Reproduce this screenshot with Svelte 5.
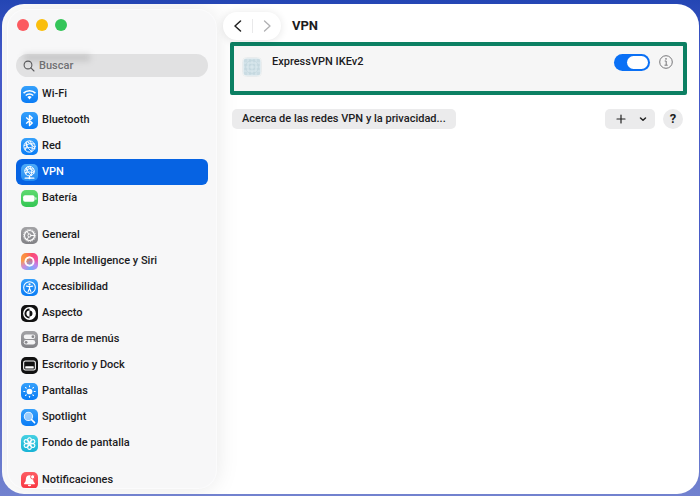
<script>
  const groups = [
    [
      { name: 'Wi-Fi', icon: 'wifi', tone: 'blue' },
      { name: 'Bluetooth', icon: 'bluetooth', tone: 'blue' },
      { name: 'Red', icon: 'globe', tone: 'blue' },
      { name: 'VPN', icon: 'vpn', tone: 'sky' },
      { name: 'Batería', icon: 'battery', tone: 'green' }
    ],
    [
      { name: 'General', icon: 'gear', tone: 'gray' },
      { name: 'Apple Intelligence y Siri', icon: 'siri', tone: 'siri' },
      { name: 'Accesibilidad', icon: 'access', tone: 'blue' },
      { name: 'Aspecto', icon: 'aspect', tone: 'black' },
      { name: 'Barra de menús', icon: 'switches', tone: 'gray' },
      { name: 'Escritorio y Dock', icon: 'dock', tone: 'black' },
      { name: 'Pantallas', icon: 'sun', tone: 'blue' },
      { name: 'Spotlight', icon: 'spot', tone: 'blue' },
      { name: 'Fondo de pantalla', icon: 'flower', tone: 'cyan' }
    ],
    [{ name: 'Notificaciones', icon: 'bell', tone: 'red' }]
  ];
  const petals = [0, 45, 90, 135, 180, 225, 270, 315];
  const sextants = [0, 60, 120, 180, 240, 300];
  let selected = $state('VPN');
  let connected = $state(true);
  let query = $state('');

  function pick(event, name) {
    event.preventDefault();
    selected = name;
  }
</script>

{#snippet globe()}
  <circle cx="8" cy="8" r="5.3" />
  <path d="M5 3.800q1.500 4-1 7.500M8.500 2.800q3.500 4.700 1.500 10M3 7q5-2.500 9.500-1.500M3.500 9.500q4.500-1.500 9.600.5M6 3.500q5 3 7 5.500M4.500 5q2 5.500 5.500 7.800" />
{/snippet}

{#snippet glyph(icon)}
  <svg viewBox="0 0 16 16" fill="none" stroke="#fff" stroke-width="1" stroke-linecap="round" stroke-linejoin="round" aria-hidden="true">
    {#if icon === 'wifi'}
      <path stroke-width="1.4" stroke-linecap="butt" d="M2.400 6.700a7.900 7.900 0 0 1 11.200 0M4.500 8.900a4.900 4.900 0 0 1 7 0" />
      <path fill="#fff" stroke="none" d="M6 10.400a2.800 2.800 0 0 1 4 0L8 12.600z" />
    {:else if icon === 'bluetooth'}
      <path stroke-width="1.300" d="M5.200 5.500l5.400 4.800L8 12.700V3.300l2.600 2.400-5.400 4.800" />
    {:else if icon === 'globe'}
      <g stroke-width=".9">{@render globe()}</g>
    {:else if icon === 'vpn'}
      <g transform="translate(1.2 -.1) scale(.85)">{@render globe()}</g>
      <path d="M8 11.3v2M3.8 13.3h8.4" />
      <circle cx="8" cy="13.3" r="1" fill="#fff" stroke="none" />
    {:else if icon === 'battery'}
      <rect x="2" y="5" width="10.8" height="6" rx="1.8" fill="#fff" stroke="none" />
      <path d="M14 7.3v1.4" />
    {:else if icon === 'gear'}
      <circle cx="8" cy="8" r="4.7" stroke-width="1.1" />
      <circle cx="8" cy="8" r="5.7" stroke-width=".8" stroke-dasharray="1 .8" stroke-linecap="butt" />
      <circle cx="8" cy="8" r="1.5" stroke-width=".9" />
      <path stroke-width=".9" d="M9.5 8h3M7.2 6.7L5.7 4.1M7.2 9.3l-1.5 2.6" />
    {:else if icon === 'siri'}
      <circle cx="8" cy="8" r="2.800" fill="#b08a9a" stroke="none" opacity=".7" />
      {#each sextants as angle}
        <path stroke-width="1" d="M5.200 5.800a2.900 2.900 0 0 1 5.600 0" transform="rotate({angle} 8 8)" />
      {/each}
      <circle cx="8" cy="8" r="3.500" stroke-width=".7" opacity=".8" />
    {:else if icon === 'access'}
      <circle cx="8" cy="8" r="5.5" />
      <circle cx="8" cy="5" r="1" fill="#fff" stroke="none" />
      <path stroke-width="1.1" d="M5.1 6.7l2.9.5 2.9-.5M8 7v2.2M8 9l-1.3 2.8M8 9l1.3 2.8" />
    {:else if icon === 'aspect'}
      <circle cx="8" cy="8" r="5.400" stroke-width="1.300" />
      <path d="M8 2.7a5.3 5.3 0 0 1 0 10.6v-2.5a2.8 2.8 0 0 0 0-5.6z" fill="#fff" stroke="none" />
      <path d="M8 5.1a2.9 2.9 0 0 0 0 5.8z" fill="#fff" stroke="none" />
    {:else if icon === 'switches'}
      <rect x="2.6" y="3.2" width="10.8" height="4.300" rx="2.100" fill="#f4f4f5" stroke="none" />
      <circle cx="11.200" cy="5.350" r="1.3" fill="#88888c" stroke="none" />
      <rect x="2.6" y="8.5" width="10.8" height="4.300" rx="2.100" fill="#f4f4f5" stroke="none" />
      <circle cx="4.800" cy="10.650" r="1.3" fill="#88888c" stroke="none" />
    {:else if icon === 'dock'}
      <rect x="2.5" y="3.8" width="11" height="8.4" rx="1.6" />
      <rect x="4" y="8.8" width="8" height="2" rx=".5" fill="#fff" stroke="none" />
    {:else if icon === 'sun'}
      <circle cx="8" cy="8" r="2.7" fill="#fff" stroke="none" />
      {#each petals as angle}
        <path d="M8 2.6v1" transform="rotate({angle} 8 8)" />
      {/each}
    {:else if icon === 'spot'}
      <circle cx="7" cy="7" r="3.900" fill="#ffffff88" stroke="#e4f2ff" />
      <path stroke-width="1.4" d="M10 10l2.8 2.8" />
    {:else if icon === 'flower'}
      {#each sextants as angle}
        <ellipse cx="8" cy="4.500" rx="1.700" ry="2" stroke-width="1" transform="rotate({angle} 8 8)" />
      {/each}
      <circle cx="8" cy="8" r="1.3" fill="#fff" stroke="none" />
    {:else if icon === 'bell'}
      <path fill="#fff" stroke="none" d="M8 3c-2.2 0-3.3 1.6-3.4 3.5C4.5 9 3.8 9.6 3 10.6c-.3.5 0 .9.5.9h9c.5 0 .8-.4.5-.9-.8-1-1.5-1.6-1.6-4.1C11.3 4.6 10.2 3 8 3zM6.4 12h3.2a1.6 1.5 0 0 1-3.2 0z" />
      <circle cx="11" cy="4.6" r="2" fill="#fff" stroke="#fb4650" stroke-width=".8" />
    {/if}
  </svg>
{/snippet}

<div class="desktop">
  <div class="window">
    <aside>
      <div class="lights">
        <button class="close" aria-label="Cerrar"></button>
        <button class="minimize" aria-label="Minimizar"></button>
        <button class="zoom" aria-label="Ampliar"></button>
      </div>
      <label class="search">
        <span class="ghost"></span>
        <svg viewBox="0 0 12 12" fill="none" stroke="#5c5c5e" stroke-width="1.1" stroke-linecap="round" aria-hidden="true">
          <circle cx="5" cy="5" r="3.9" /><path d="M7.9 7.9l3.1 3.1" />
        </svg>
        <input type="text" placeholder="Buscar" aria-label="Buscar" bind:value={query} />
      </label>
      <nav>
        {#each groups as group}
          <ul>
            {#each group as item}
              <li>
                <a href="#{item.icon}" class:selected={selected === item.name} onclick={(e) => pick(e, item.name)}>
                  <span class="tile {item.tone}">{@render glyph(item.icon)}</span>
                  {item.name}
                </a>
              </li>
            {/each}
          </ul>
        {/each}
      </nav>
    </aside>

    <main>
      <header>
        <div class="history">
          <button aria-label="Atrás">
            <svg viewBox="0 0 12 12" fill="none" stroke="#222" stroke-width="1.5" stroke-linecap="round" stroke-linejoin="round"><path d="M8.5 1L3 6l5.500 5" /></svg>
          </button>
          <button aria-label="Adelante" disabled>
            <svg viewBox="0 0 12 12" fill="none" stroke="#b0b0b2" stroke-width="1.3" stroke-linecap="round" stroke-linejoin="round"><path d="M3.5 1L9 6l-5.500 5" /></svg>
          </button>
        </div>
        <h1>VPN</h1>
      </header>

      <section class="connection">
        <svg class="app" viewBox="0 0 20 20" aria-hidden="true">
          <rect x=".5" y=".5" width="19" height="19" rx="4" fill="#fbfcfc" stroke="#e9eced" />
          <rect x="1.500" y="1.500" width="17" height="17" rx="3" fill="#cadce3" />
          <path d="M2 6h16M2 10h16M2 14h16M6 2v16M10 2v16M14 2v16" stroke="#e2eef2" stroke-width=".7" />
          <g fill="none" stroke="#bdd3db" stroke-width=".5"><circle cx="10" cy="10" r="3" /><circle cx="10" cy="10" r="6.500" /></g>
        </svg>
        <label for="connect">ExpressVPN IKEv2</label>
        <input id="connect" type="checkbox" role="switch" bind:checked={connected} />
        <button class="info" aria-label="Información">
          <svg viewBox="0 0 14 14" fill="none" stroke="#77777a" stroke-width="1"><circle cx="7" cy="7" r="6.3" /><path d="M5.700 6h1.500v4M5.500 10.200h3.200" /><circle cx="7" cy="3.9" r=".8" fill="#77777a" stroke="none" /></svg>
        </button>
      </section>

      <footer>
        <button class="about">Acerca de las redes VPN y la privacidad...</button>
        <div class="add">
          <button aria-label="Añadir configuración">
            <svg viewBox="0 0 10 10" fill="none" stroke="#222" stroke-width="1.2" stroke-linecap="round"><path d="M5 1v8M1 5h8" /></svg>
          </button>
          <button aria-label="Más opciones">
            <svg viewBox="0 0 10 10" fill="none" stroke="#222" stroke-width="1.5" stroke-linecap="round" stroke-linejoin="round"><path d="M2.500 4L5 6.300 7.500 4" /></svg>
          </button>
        </div>
        <button class="help">?</button>
      </footer>
    </main>
  </div>
</div>

<style>
  :global(body) {
    margin: 0;
  }
  .desktop {
    box-sizing: border-box;
    height: 100vh;
    padding: 4px 1px 2px 2px;
    background: linear-gradient(#2446b4, #4459c8 12%, #4b5dc6 70%, #7282cf);
    font: 500 11px/14px Roboto, 'Liberation Sans', sans-serif;
    color: #1c1c1e;
  }
  .window {
    box-sizing: border-box;
    display: flex;
    height: 100%;
    padding: 6px;
    border-radius: 22px;
    background: #fff;
    overflow: hidden;
  }
  button {
    display: grid;
    place-items: center;
    margin: 0;
    padding: 0;
    border: 0;
    background: none;
    font: inherit;
    color: inherit;
  }
  aside {
    box-sizing: border-box;
    flex: 0 0 208px;
    padding: 0 8px;
    border-radius: 18px;
    background: #f7f7f8;
    box-shadow: 0 0 0 1px #fbfbfc, 0 0 24px #0000001a;
    overflow: hidden;
  }
  .lights {
    display: flex;
    gap: 7px;
    padding: 9px 1px 23px;
  }
  .lights button {
    width: 12px;
    height: 12px;
    border-radius: 50%;
  }
  .close {
    background: #fb5a60;
  }
  .minimize {
    background: #fabe0c;
  }
  .zoom {
    background: #34c559;
  }
  .search {
    position: relative;
    display: flex;
    align-items: center;
    gap: 4px;
    height: 23px;
    padding: 0 7px;
    border-radius: 12px;
    background: #e1e1e2;
  }
  .search svg {
    width: 12px;
    height: 12px;
  }
  .ghost {
    position: absolute;
    top: 0;
    left: 8px;
    width: 66px;
    height: 7px;
    background: #00000020;
    filter: blur(3px);
  }
  .search input {
    position: relative;
    flex: 1;
    min-width: 0;
    padding: 0;
    border: 0;
    outline: 0;
    background: none;
    font: inherit;
  }
  .search input::placeholder {
    color: #707072;
    opacity: 1;
  }
  nav {
    display: flex;
    flex-direction: column;
    gap: 11px;
    padding-top: 4px;
  }
  ul {
    margin: 0;
    padding: 0;
    list-style: none;
  }
  a {
    display: flex;
    align-items: center;
    gap: 4px;
    height: 26px;
    padding: 0 5px;
    border-radius: 6px;
    color: inherit;
    text-decoration: none;
  }
  a.selected {
    background: #0663e3;
    color: #fff;
  }
  .tile {
    width: 17px;
    height: 17px;
    border-radius: 5px;
  }
  .tile svg {
    display: block;
  }
  .blue {
    background: linear-gradient(#35a0fb, #0a7cf5);
  }
  .sky {
    background: linear-gradient(#4fabf8, #258df2);
  }
  .green {
    background: linear-gradient(#5fda70, #33c653);
  }
  .gray {
    background: linear-gradient(#a3a3a6, #828286);
  }
  .black {
    background: #111;
  }
  .cyan {
    background: linear-gradient(#45d0e2, #18b3d6);
  }
  .red {
    background: linear-gradient(#fc5d63, #f93541);
  }
  .siri {
    background: conic-gradient(from 20deg, #fa4c72, #f5509c, #b58bf3, #6fb0f8, #c98ee0, #fb9a4c, #fb8a3f, #fa4c72);
  }
  main {
    flex: 1;
    min-width: 0;
    padding: 0 6px 0 7px;
  }
  header {
    display: flex;
    align-items: center;
    gap: 11px;
    padding-top: 2px;
  }
  .history {
    display: flex;
    height: 28px;
    border-radius: 14px;
    background: #fff;
    box-shadow: 0 1px 8px #0000001c;
  }
  .history button {
    width: 29px;
    position: relative;
  }
  .history button + button::before {
    content: '';
    position: absolute;
    left: 0;
    top: 7px;
    width: 1px;
    height: 14px;
    background: #e9e9ea;
  }
  .history svg {
    width: 12px;
    height: 12px;
  }
  h1 {
    margin: 0;
    font-size: 13px;
    font-weight: 700;
  }
  .connection {
    display: flex;
    align-items: flex-start;
    box-sizing: border-box;
    height: 53px;
    margin: 2px 0 0 7px;
    padding: 8px 10px 0 8px;
    border: 4px solid #0c8063;
    border-radius: 2px;
    background: #f6f6f6;
  }
  .app {
    width: 20px;
    height: 20px;
    margin-top: 3px;
  }
  .connection label {
    flex: 1;
    padding-left: 10px;
    line-height: 16px;
  }
  .connection input {
    appearance: none;
    display: flex;
    justify-content: flex-end;
    box-sizing: border-box;
    width: 36px;
    height: 17px;
    margin: 0 9px 0 0;
    padding: 2px;
    border-radius: 9px;
    background: #c8c8ca;
  }
  .connection input:checked {
    background: #0a70f5;
  }
  .connection input::before {
    content: '';
    width: 21px;
    border-radius: 7px;
    background: #fff;
  }
  .connection input:not(:checked) {
    justify-content: flex-start;
  }
  .info {
    margin-top: 1px;
  }
  .info svg {
    display: block;
    width: 14px;
    height: 14px;
  }
  footer {
    display: flex;
    gap: 8px;
    padding: 14px 4px 0 9px;
  }
  .about,
  .add,
  .help {
    height: 20px;
    border-radius: 5px;
    background: #ebebec;
  }
  .about {
    margin-right: auto;
    padding: 0 10px;
  }
  .add {
    display: flex;
  }
  .add button {
    box-sizing: border-box;
    width: 25px;
    height: 20px;
  }
  .add svg {
    width: 10px;
    height: 10px;
  }
  .add button:first-child {
    padding-left: 6px;
  }
  .help {
    width: 20px;
    border-radius: 50%;
    font-size: 13px;
    font-weight: 700;
  }
</style>
